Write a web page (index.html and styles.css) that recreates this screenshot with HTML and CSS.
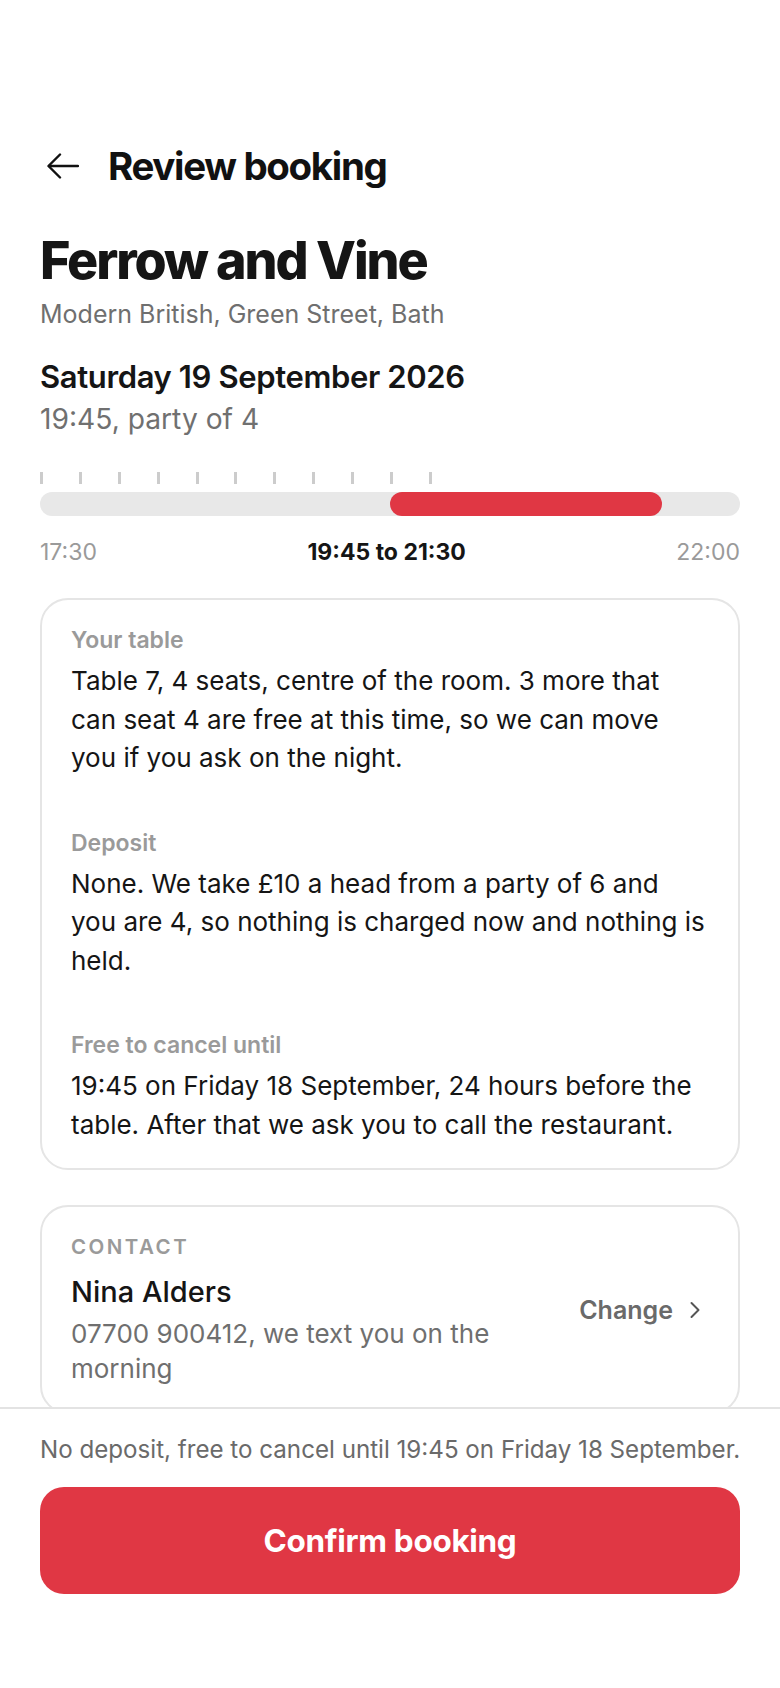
FILE: index.html
```html
<!DOCTYPE html>
<html lang="en">
<head>
<meta charset="utf-8">
<title>Review booking</title>
<link rel="stylesheet" href="styles.css">
</head>
<body>
<main class="page">
  <header class="topbar">
    <button class="back" aria-label="Back">
      <svg width="32" height="26" viewBox="0 0 32 26" fill="none" stroke="#111" stroke-width="2.4" stroke-linecap="round" stroke-linejoin="round"><path d="M31 13H2"/><path d="M13 1.5L1.5 13L13 24.5"/></svg>
    </button>
    <h1 class="topbar-title">Review booking</h1>
  </header>

  <section class="venue">
    <h2 class="venue-name">Ferrow and Vine</h2>
    <p class="venue-meta">Modern British, Green Street, Bath</p>
    <p class="date">Saturday 19 September 2026</p>
    <p class="time">19:45, party of 4</p>
  </section>

  <section class="timeline">
    <div class="ticks">
      <span class="tick" style="left:0%"></span>
      <span class="tick" style="left:5.556%"></span>
      <span class="tick" style="left:11.111%"></span>
      <span class="tick" style="left:16.667%"></span>
      <span class="tick" style="left:22.222%"></span>
      <span class="tick" style="left:27.778%"></span>
      <span class="tick" style="left:33.333%"></span>
      <span class="tick" style="left:38.889%"></span>
      <span class="tick" style="left:44.444%"></span>
      <span class="tick" style="left:50%"></span>
      <span class="tick" style="left:55.556%"></span>
    </div>
    <div class="track">
      <div class="slot" style="left:50%;width:38.889%"></div>
    </div>
    <div class="labels">
      <span class="lab-edge">17:30</span>
      <span class="lab-mid">19:45 to 21:30</span>
      <span class="lab-edge">22:00</span>
    </div>
  </section>

  <section class="card details">
    <div class="item">
      <p class="item-label">Your table</p>
      <p class="item-body">Table 7, 4 seats, centre of the room. 3 more that can seat 4 are free at this time, so we can move you if you ask on the night.</p>
    </div>
    <div class="item">
      <p class="item-label">Deposit</p>
      <p class="item-body">None. We take £10 a head from a party of 6 and you are 4, so nothing is charged now and nothing is held.</p>
    </div>
    <div class="item">
      <p class="item-label">Free to cancel until</p>
      <p class="item-body">19:45 on Friday 18 September, 24 hours before the table. After that we ask you to call the restaurant.</p>
    </div>
  </section>

  <section class="card contact">
    <div class="contact-info">
      <p class="eyebrow">CONTACT</p>
      <p class="contact-name">Nina Alders</p>
      <p class="contact-phone">07700 900412, we text you on the morning</p>
    </div>
    <button class="change">
      <span>Change</span>
      <svg width="12" height="18" viewBox="0 0 12 18" fill="none" stroke="#555" stroke-width="2" stroke-linecap="round" stroke-linejoin="round"><path d="M2.5 2l7 7-7 7"/></svg>
    </button>
  </section>
</main>

<footer class="footer">
  <p class="footer-note">No deposit, free to cancel until 19:45 on Friday 18 September.</p>
  <button class="confirm">Confirm booking</button>
</footer>
</body>
</html>
```
FILE: styles.css
```css
* { box-sizing: border-box; }
html, body { margin: 0; padding: 0; background: #fff; }
body {
  font-family: Inter, "Noto Sans", "Liberation Sans", sans-serif;
  color: #151515;
  width: 780px;
  min-height: 1688px;
}
p, h1, h2 { margin: 0; }
button { font-family: inherit; border: 0; background: none; padding: 0; cursor: pointer; }

.page {
  padding: 142px 40px 300px;
}

.topbar {
  display: flex;
  align-items: center;
  gap: 25px;
  height: 48px;
}
.back {
  display: flex;
  align-items: center;
  padding-left: 7px;
  width: 43px;
  height: 48px;
}
.topbar-title {
  font-size: 38.5px;
  font-weight: 700;
  letter-spacing: -0.035em;
  line-height: 48px;
  color: #111;
}

.venue { margin-top: 41px; }
.venue-name {
  font-size: 52px;
  font-weight: 800;
  letter-spacing: -0.04em;
  line-height: 60px;
  color: #151515;
}
.venue-meta {
  margin-top: 7px;
  font-size: 25px;
  line-height: 32px;
  color: #6f6f6f;
}
.date {
  margin-top: 29px;
  font-size: 31px;
  font-weight: 600;
  line-height: 36px;
  letter-spacing: -0.012em;
  color: #151515;
}
.time {
  margin-top: 6px;
  font-size: 28.2px;
  line-height: 36px;
  color: #707070;
}

.timeline { margin-top: 35px; }
.ticks {
  position: relative;
  height: 12px;
}
.tick {
  position: absolute;
  top: 0;
  width: 3px;
  height: 12px;
  background: #cccccc;
}
.track {
  position: relative;
  margin-top: 8px;
  height: 24px;
  border-radius: 12px;
  background: #e8e8e8;
}
.slot {
  position: absolute;
  top: 0;
  height: 24px;
  border-radius: 12px;
  background: #e03744;
}
.labels {
  display: flex;
  justify-content: space-between;
  align-items: center;
  margin-top: 22px;
  font-size: 23px;
  line-height: 28px;
}
.lab-edge { color: #9a9a9a; }
.lab-mid { font-weight: 700; color: #151515; }

.card {
  border: 2px solid #e5e5e5;
  border-radius: 28px;
  background: #fff;
}
.details {
  margin-top: 32px;
  padding: 26px 29px 24px;
  display: flex;
  flex-direction: column;
  gap: 51px;
}
.item-label {
  font-size: 23px;
  font-weight: 600;
  line-height: 28px;
  color: #9a9a9a;
}
.item-body {
  margin-top: 8px;
  font-size: 26px;
  line-height: 38.5px;
  color: #151515;
}

.contact {
  margin-top: 35px;
  padding: 26px 29px 26px;
  display: flex;
  align-items: center;
  gap: 24px;
}
.contact-info { flex: 1; }
.eyebrow {
  font-size: 20.5px;
  font-weight: 600;
  letter-spacing: 0.12em;
  line-height: 28px;
  color: #9a9a9a;
}
.contact-name {
  margin-top: 14px;
  font-size: 29px;
  font-weight: 500;
  line-height: 34px;
  color: #151515;
}
.contact-phone {
  margin-top: 7px;
  font-size: 26px;
  line-height: 35px;
  color: #6f6f6f;
}
.change {
  display: flex;
  align-items: center;
  gap: 16px;
  font-size: 25px;
  font-weight: 600;
  color: #6a6a6a;
  padding-right: 8px;
}

.footer {
  position: fixed;
  left: 0;
  bottom: 0;
  width: 780px;
  height: 281px;
  background: #fff;
  border-top: 2px solid #e3e3e3;
  padding: 27px 40px 0;
}
.footer-note {
  font-size: 24.15px;
  line-height: 28px;
  color: #6a6a6a;
  white-space: nowrap;
}
.confirm {
  display: flex;
  align-items: center;
  justify-content: center;
  margin-top: 23px;
  width: 100%;
  height: 107px;
  border-radius: 24px;
  background: #e03744;
  color: #fff;
  font-size: 31.5px;
  font-weight: 700;
  letter-spacing: -0.01em;
}
```
